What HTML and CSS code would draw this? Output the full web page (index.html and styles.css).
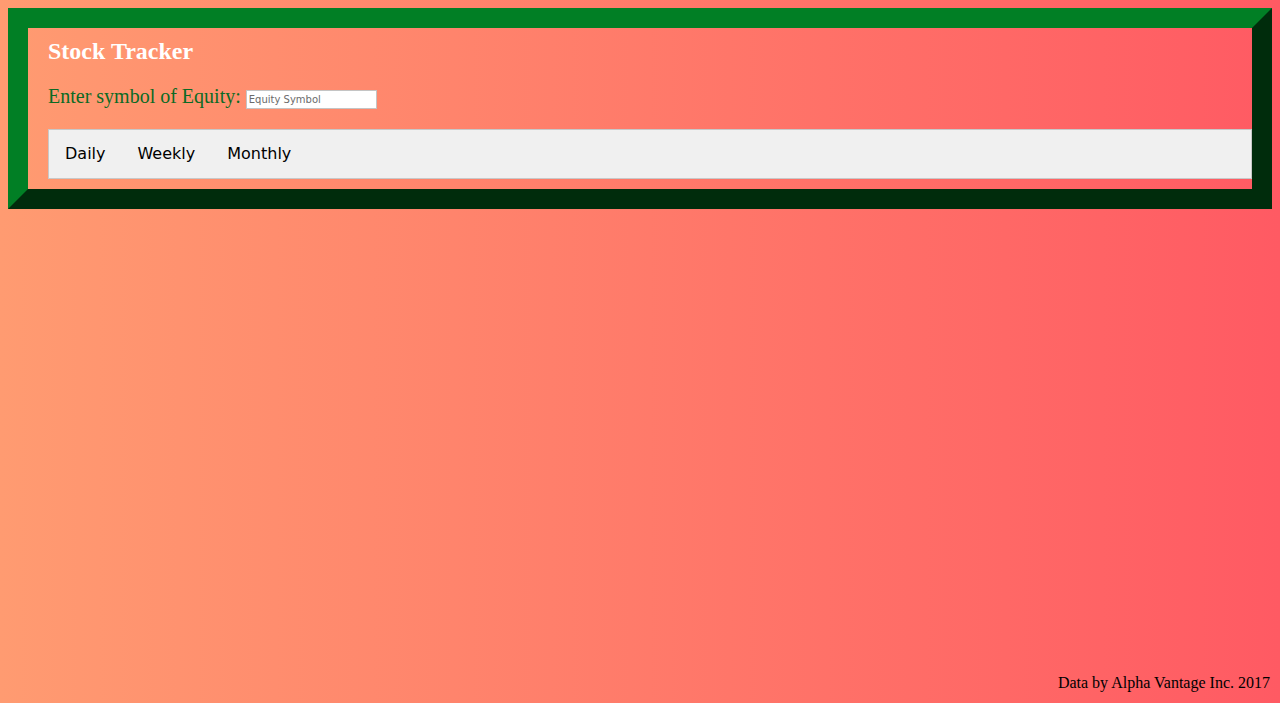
FILE: index.html
```html
<!DOCTYPE html>
<html>
<head>
<meta charset="utf-8">
<title>Stock Tracker</title>
<link rel="stylesheet" href="styles.css">
</head>
<body>
<header class="header">
  <h2 class="title">Stock Tracker</h2>
  <p class="prompt">Enter symbol of Equity: <input class="symbol-input" type="text" placeholder="Equity Symbol"></p>
  <nav class="topnav">
    <a class="nav-link" href="#">Daily</a>
    <a class="nav-link" href="#">Weekly</a>
    <a class="nav-link" href="#">Monthly</a>
  </nav>
</header>
<footer class="footer">Data by Alpha Vantage Inc. 2017</footer>
</body>
</html>
```
FILE: styles.css
```css
html {
  height: 100%;
}
body {
  margin: 8px;
  min-height: calc(100% - 16px);
  display: flex;
  flex-direction: column;
  font-family: "Liberation Serif", "Times New Roman", serif;
  font-size: 16px;
  color: #000;
  background: linear-gradient(to right, #ff9b71, #ff5a63) fixed;
}
.header {
  border: 20px solid;
  border-color: #017f25 #002c0c #002c0c #017f25;
  padding: 10px 0 10px 20px;
}
.title {
  margin: 0 0 20px;
  font-size: 24px;
  font-weight: bold;
  color: #fff;
  line-height: 27px;
}
.prompt {
  margin: 0 0 20px;
  font-size: 20px;
  line-height: 23px;
  color: #0b6a24;
}
.symbol-input {
  box-sizing: border-box;
  width: 131px;
  height: 19px;
  padding: 1px 2px;
  border: 1px solid #c4c4c4;
  background: #fff;
  font-family: "DejaVu Sans", Verdana, sans-serif;
  font-size: 10px;
  vertical-align: 0;
  outline: none;
}
.symbol-input::placeholder {
  color: #6b6b6b;
}
.topnav {
  display: flex;
  background: #f0f0f0;
  border: 1px solid #c8c8c8;
}
.nav-link {
  padding: 14px 16px;
  font-family: "DejaVu Sans", Verdana, sans-serif;
  font-size: 16px;
  line-height: 20px;
  color: #000;
  text-decoration: none;
}
.footer {
  margin-top: auto;
  text-align: right;
  padding: 0 2px 3px 0;
}
```
